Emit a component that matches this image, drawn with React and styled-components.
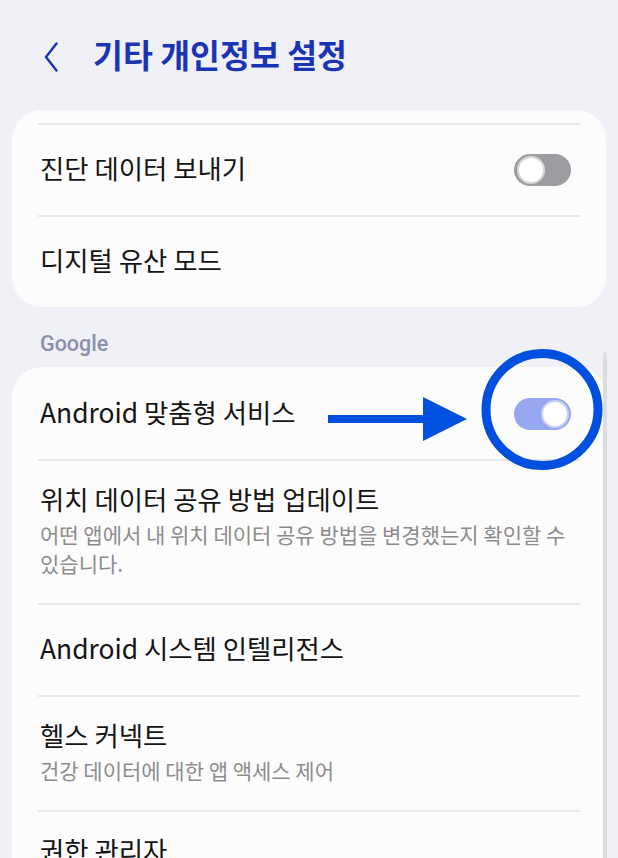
import React from 'react';
import styled, { createGlobalStyle } from 'styled-components';

const Global = createGlobalStyle`
  html, body { margin: 0; padding: 0; background: #f0f1f6; }
  body {
    font-family: "Noto Sans CJK KR", "Noto Sans", sans-serif;
    -webkit-font-smoothing: antialiased;
  }
`;

const Screen = styled.div`
  position: relative;
  width: 618px;
  height: 858px;
  overflow: hidden;
  background: #f0f1f6;
`;

const Header = styled.header`
  height: 110px;
  box-sizing: border-box;
  padding: 0 0 2px 44px;
  display: flex;
  align-items: center;
  gap: 35px;
`;

const BackButton = styled.svg`
  width: 14px;
  height: 30px;
  flex: none;
  margin-top: 6px;
`;

const Title = styled.h1`
  margin: 0;
  font-size: 32.5px;
  line-height: 40px;
  font-weight: 700;
  color: #1a34b4;
`;

const Card = styled.section`
  margin: 0 12px;
  background: #fcfcfc;
  border-radius: 30px;
  padding: ${p => (p.$topGap ? '13px' : '0')} 26px 0;
`;

const Row = styled.div`
  display: flex;
  align-items: center;
  justify-content: space-between;
  border-top: 2px solid ${p => (p.$divided ? '#e8e8eb' : 'transparent')};
  padding: ${p => (p.$tall ? '22px 0 25px' : '27px 0 31px')};
`;

const TextCol = styled.div`
  display: flex;
  flex-direction: column;
  padding-left: 2px;
  word-break: keep-all;
`;

const RowTitle = styled.div`
  font-size: 26.4px;
  line-height: 32px;
  color: #141414;
  font-weight: 400;
`;

const RowSub = styled.div`
  margin-top: 5px;
  font-size: 21px;
  line-height: 29px;
  color: #8c8c8e;
`;

const Track = styled.div`
  flex: none;
  width: 57px;
  height: 32px;
  margin: 2px 9px -2px 0;
  border-radius: 16px;
  box-sizing: border-box;
  padding: 0 2.5px;
  display: flex;
  align-items: center;
  justify-content: ${p => (p.$on ? 'flex-end' : 'flex-start')};
  background: ${p => (p.$on ? '#97a7f0' : '#9d9da1')};
`;

const Thumb = styled.div`
  width: 28px;
  height: 28px;
  border-radius: 50%;
  box-sizing: border-box;
  background: #ffffff;
  border: 2px solid ${p => (p.$on ? '#c9d1f8' : '#d6d6d8')};
`;

const SectionLabel = styled.div`
  padding: 24px 0 10px 40px;
  font-family: "Roboto", "Noto Sans", sans-serif;
  font-size: 21.5px;
  line-height: 26px;
  font-weight: 500;
  color: #8a90ae;
`;

const Annotation = styled.svg`
  position: absolute;
  left: 320px;
  top: 345px;
  width: 290px;
  height: 130px;
  pointer-events: none;
`;

const Scrollbar = styled.div`
  position: absolute;
  left: 603px;
  top: 352px;
  width: 4px;
  height: 520px;
  border-radius: 2px;
  background: #dcdde2;
`;

function Toggle({ on }) {
  return (
    <Track $on={on}>
      <Thumb $on={on} />
    </Track>
  );
}

function SettingRow({ title, sub, toggle, divided, tall }) {
  return (
    <Row $divided={divided} $tall={tall || !!sub}>
      <TextCol>
        <RowTitle>{title}</RowTitle>
        {sub && <RowSub>{sub}</RowSub>}
      </TextCol>
      {toggle !== undefined && <Toggle on={toggle} />}
    </Row>
  );
}

export default function App() {
  return (
    <>
      <Global />
      <Screen>
        <Header>
          <BackButton viewBox="0 0 14 30" fill="none">
            <path d="M12.5 1.5 L2 15 L12.5 28.5" stroke="#1a34b4" strokeWidth="2.4" strokeLinecap="round" strokeLinejoin="round" />
          </BackButton>
          <Title>기타 개인정보 설정</Title>
        </Header>

        <Card $topGap>
          <SettingRow divided title="진단 데이터 보내기" toggle={false} />
          <SettingRow divided title="디지털 유산 모드" />
        </Card>

        <SectionLabel>Google</SectionLabel>

        <Card>
          <SettingRow title="Android 맞춤형 서비스" toggle={true} />
          <SettingRow
            divided
            title="위치 데이터 공유 방법 업데이트"
            sub="어떤 앱에서 내 위치 데이터 공유 방법을 변경했는지 확인할 수 있습니다."
          />
          <SettingRow divided title="Android 시스템 인텔리전스" />
          <SettingRow divided title="헬스 커넥트" sub="건강 데이터에 대한 앱 액세스 제어" />
          <SettingRow divided tall title="권한 관리자" />
        </Card>

        <Scrollbar />

        <Annotation viewBox="0 0 290 130">
          <rect x="8" y="70" width="97" height="8" fill="#0050df" />
          <polygon points="103,52 147,74 103,96" fill="#0050df" />
          <circle cx="222" cy="64.5" r="56" fill="none" stroke="#0050df" strokeWidth="9" />
        </Annotation>
      </Screen>
    </>
  );
}
